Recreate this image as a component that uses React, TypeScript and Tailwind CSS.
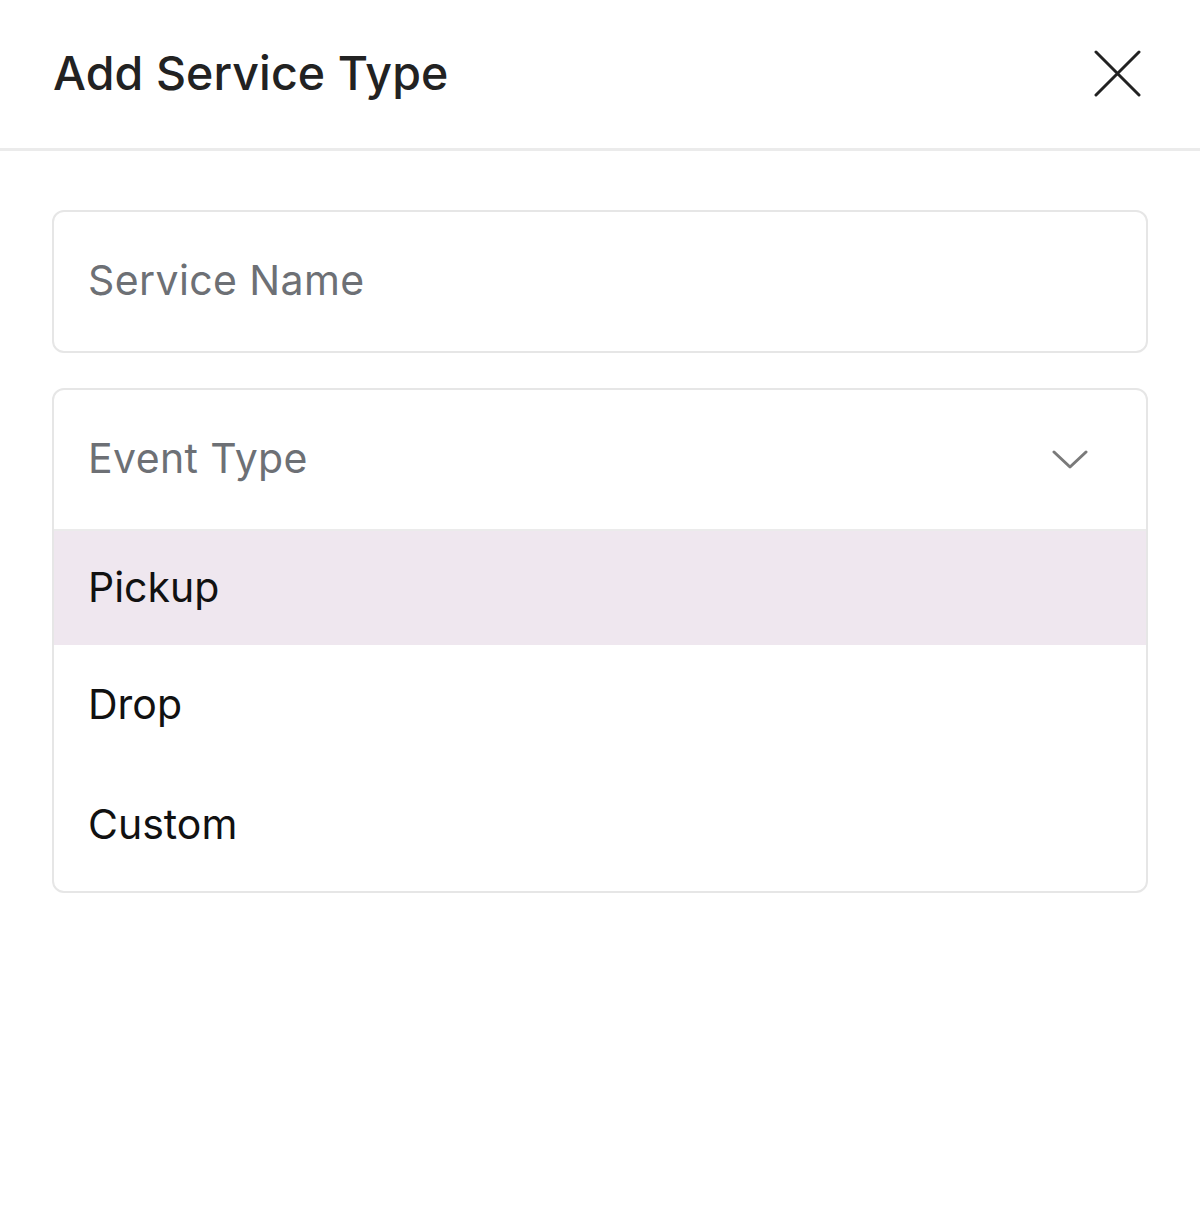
import React from "react";

export default function App() {
  const font = { fontFamily: "Inter, 'Noto Sans', sans-serif" };
  return (
    <div className="w-[1200px] h-[1222px] bg-white" style={font}>
      <div className="h-[151px] flex items-center justify-between pl-[53px] pr-[59px] border-b-[3px] border-[#ebebeb]">
        <h1 className="text-[46.5px] leading-none font-medium text-[#222222] tracking-[0.1px] -mt-[1px]">Add Service Type</h1>
        <svg width="47" height="47" viewBox="0 0 47 47" className="-mt-[1px]">
          <path d="M2 2 L45 45 M45 2 L2 45" stroke="#222222" strokeWidth="3" strokeLinecap="round" fill="none" />
        </svg>
      </div>
      <div className="px-[52px] pt-[59px] flex flex-col gap-[35px]">
        <div className="h-[143px] border-2 border-[#e6e6e6] rounded-[12px] flex items-center pl-[34px]">
          <span className="text-[41px] text-[#6d7075] tracking-[0.4px] -mt-[2px]">Service Name</span>
        </div>
        <div className="border-2 border-[#e6e6e6] rounded-[12px] overflow-hidden">
          <div className="h-[141px] flex items-center justify-between pl-[34px] pr-[58px] border-b-2 border-[#ebebeb]">
            <span className="text-[41px] text-[#6d7075] tracking-[0.4px] -mt-[2px]">Event Type</span>
            <svg width="36" height="20" viewBox="0 0 36 20" className="mt-[1px]">
              <path d="M2 2 L18 17 L34 2" stroke="#7a7a7a" strokeWidth="3" strokeLinecap="round" strokeLinejoin="round" fill="none" />
            </svg>
          </div>
          <div className="h-[114px] bg-[#efe7ef] flex items-center pl-[34px]">
            <span className="text-[41px] text-[#111111]">Pickup</span>
          </div>
          <div className="h-[120px] flex items-center pl-[34px]">
            <span className="text-[41px] text-[#111111]">Drop</span>
          </div>
          <div className="h-[120px] flex items-center pl-[34px] mb-[6px]">
            <span className="text-[41px] text-[#111111]">Custom</span>
          </div>
        </div>
      </div>
    </div>
  );
}
